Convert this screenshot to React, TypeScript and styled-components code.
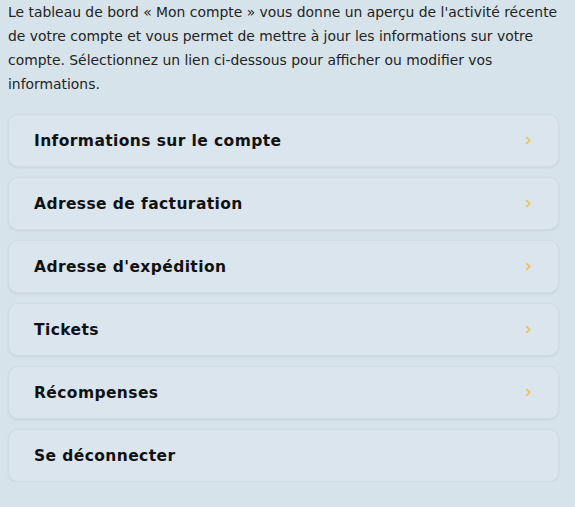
import React from 'react'
import styled, { createGlobalStyle } from 'styled-components'

const GlobalStyle = createGlobalStyle`
    html, body {
        margin: 0;
        padding: 0;
        background: #d7e3eb;
    }
    body {
        font-family: "DejaVu Sans", "Liberation Sans", sans-serif;
        color: #1c1c1c;
    }
`

const links = [
    { label: 'Informations sur le compte', arrow: true },
    { label: 'Adresse de facturation', arrow: true },
    { label: "Adresse d'expédition", arrow: true },
    { label: 'Tickets', arrow: true },
    { label: 'Récompenses', arrow: true },
    { label: 'Se déconnecter', arrow: false },
]

function Chevron() {
    return (
        <svg width="6" height="9" viewBox="0 0 6 9">
            <path d="M1.2 1.2 L4.8 4.5 L1.2 7.8" fill="none" stroke="#ecc45e" strokeWidth="1.7" strokeLinejoin="round" />
        </svg>
    )
}

export default function App() {
    return (
        <>
            <GlobalStyle />
            <Page>
                <Intro>
                    Le tableau de bord « Mon compte » vous donne un aperçu de l'activité récente<br />
                    de votre compte et vous permet de mettre à jour les informations sur votre<br />
                    compte. Sélectionnez un lien ci-dessous pour afficher ou modifier vos<br />
                    informations.
                </Intro>
                <LinkList>
                    {links.map((l) => (
                        <LinkCard key={l.label}>
                            <span>{l.label}</span>
                            {l.arrow ? <Chevron /> : null}
                        </LinkCard>
                    ))}
                </LinkList>
            </Page>
        </>
    )
}

const Page = styled.div`
    padding: 0 16px 0 8px;
`

const Intro = styled.p`
    margin: 0 0 18px;
    font-size: 13.9px;
    line-height: 24px;
    white-space: nowrap;
    color: #232323;
`

const LinkList = styled.div`
    display: flex;
    flex-direction: column;
    gap: 10px;
`

const LinkCard = styled.div`
    height: 53px;
    box-sizing: border-box;
    display: flex;
    align-items: center;
    justify-content: space-between;
    padding: 0 27px 0 25px;
    background: #dae5ee;
    border: 1px solid #d0dce5;
    border-radius: 10px;
    box-shadow: 0 1px 2px rgba(120, 140, 160, 0.18);
    span {
        font-size: 15.5px;
        font-weight: bold;
        letter-spacing: 0.4px;
        color: #111;
    }
`
